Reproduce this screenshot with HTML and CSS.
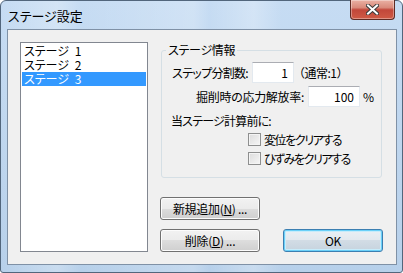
FILE: index.html
```html
<!DOCTYPE html>
<html lang="ja">
<head>
    <title>ステージ設定</title>
    <link rel="stylesheet" href="styles.css">
</head>
<body>
    <div class="window">
        <div class="titlebar">
            <span class="title">ステージ設定</span>
            <div class="close-btn">
                <svg width="13" height="11" viewBox="0 0 13 11">
                    <path d="M2 1.5 L11 9.5 M11 1.5 L2 9.5" stroke="#3b3b3b" stroke-width="4" stroke-linecap="square"/>
                    <path d="M2 1.5 L11 9.5 M11 1.5 L2 9.5" stroke="#fff" stroke-width="2" stroke-linecap="square"/>
                </svg>
            </div>
        </div>
        <div class="client">
            <ul class="stage-list">
                <li>ステージ 1</li>
                <li>ステージ 2</li>
                <li class="selected">ステージ 3</li>
            </ul>
            <div class="side">
                <fieldset class="group">
                    <legend>ステージ情報</legend>
                    <div class="row row-step">
                        <span class="label label-step">ステップ分割数:</span>
                        <span class="edit edit-step">1</span>
                        <span class="note note-step">（通常:1）</span>
                    </div>
                    <div class="row row-rate">
                        <span class="label label-rate">掘削時の応力解放率:</span>
                        <span class="edit edit-rate">100</span>
                        <span class="note">%</span>
                    </div>
                    <div class="caption">当ステージ計算前に:</div>
                    <div class="check">
                        <span class="box"></span>
                        <span class="check-text">変位をクリアする</span>
                    </div>
                    <div class="check">
                        <span class="box"></span>
                        <span class="check-text">ひずみをクリアする</span>
                    </div>
                </fieldset>
                <div class="buttons">
                    <button class="btn">新規追加(<u>N</u>) ...</button>
                    <div class="button-row">
                        <button class="btn">削除(<u>D</u>) ...</button>
                        <button class="btn btn-default">OK</button>
                    </div>
                </div>
            </div>
        </div>
    </div>
</body>
</html>
```

FILE: styles.css
```css
body {
    margin: 0;
    padding: 0;
    width: 403px;
    height: 273px;
    overflow: hidden;
    background-color: #ffffff;
    font-family: "Noto Sans CJK JP", "Noto Sans", sans-serif;
    font-feature-settings: "palt";
}

.window {
    width: 403px;
    height: 273px;
    box-sizing: border-box;
    border: 1px solid #52667c;
    border-radius: 6px 6px 3px 3px;
    background:
        linear-gradient(90deg, rgba(255,255,255,0) 0%, rgba(255,255,255,0.25) 14%, rgba(255,255,255,0) 20%, rgba(255,255,255,0.2) 48%, rgba(255,255,255,0) 52%, rgba(255,255,255,0.25) 63%, rgba(255,255,255,0) 70%),
        linear-gradient(#c6dcf3, #b7d0ea);
    display: flex;
    flex-direction: column;
}

.titlebar {
    height: 28px;
    display: flex;
    justify-content: space-between;
    align-items: center;
    padding-left: 7px;
    padding-right: 7px;
}

.title {
    font-size: 13px;
    color: #000;
    line-height: 16px;
    margin-top: 1px;
}

.close-btn {
    align-self: flex-start;
    margin-top: -1px;
    width: 43px;
    height: 19px;
    border: 1px solid #5e2b24;
    border-top: none;
    border-radius: 0 0 4px 4px;
    background: linear-gradient(#eab1a4 0%, #d98a7b 40%, #c2473a 52%, #cf5a45 100%);
    box-shadow: inset 0 0 0 1px rgba(255,255,255,0.35);
    display: flex;
    align-items: center;
    justify-content: center;
}

.client {
    flex: 1;
    margin: 0 5px 7px 6px;
    border: 1px solid #7f91a6;
    background-color: #f0f0f0;
    padding: 12px 0 0 12px;
    display: flex;
    gap: 12px;
    font-size: 12px;
    color: #000;
}

.stage-list {
    width: 128px;
    height: 210px;
    box-sizing: border-box;
    margin: 0;
    padding: 1px;
    list-style: none;
    border: 1px solid #828790;
    background-color: #fff;
}

.stage-list li {
    height: 14px;
    line-height: 14px;
    padding-left: 2px;
    word-spacing: 3px;
}

.stage-list .selected {
    background-color: #3399ff;
    color: #fff;
}

.side {
    width: 223px;
    height: 210px;
    display: flex;
    flex-direction: column;
    justify-content: space-between;
}

.group {
    margin: 0 0 0 1px;
    padding: 0;
    width: 221px;
    height: 136px;
    box-sizing: border-box;
    border: 1px solid #d5dfe5;
    border-radius: 3px;
}

.group legend {
    margin-left: 4px;
    padding: 0 2px;
    line-height: 16px;
    letter-spacing: -0.3px;
}

.row {
    display: flex;
    align-items: center;
    height: 21px;
    margin-top: 3px;
}

.row-step {
    margin-top: 4px;
}

.label {
    text-align: right;
    box-sizing: border-box;
    padding-right: 4px;
    white-space: nowrap;
}

.label-step {
    width: 81px;
    margin-left: 9px;
    letter-spacing: -0.7px;
}

.label-rate {
    width: 137px;
    margin-left: 9px;
    letter-spacing: -0.3px;
}

.edit {
    height: 21px;
    box-sizing: border-box;
    border: 1px solid #e3e9ef;
    border-top-color: #abadb3;
    background-color: #fff;
    text-align: right;
    padding-right: 5px;
    line-height: 19px;
}

.edit-step {
    width: 42px;
}

.edit-rate {
    width: 52px;
}

.note {
    margin-left: 3px;
    font-feature-settings: normal;
    letter-spacing: -0.5px;
}

.note-step {
    margin-left: -1px;
}

.caption {
    margin: 7px 0 0 9px;
    line-height: 14px;
    letter-spacing: -0.8px;
}

.check {
    display: flex;
    align-items: center;
    gap: 3px;
    height: 16px;
    margin-left: 86px;
    margin-top: 3px;
}

.check-text {
    letter-spacing: -1.4px;
}

.box {
    width: 13px;
    height: 13px;
    box-sizing: border-box;
    border: 1px solid #8e8f8f;
    background: linear-gradient(135deg, #dcdcdc, #f6f6f6);
    box-shadow: inset 0 0 0 1px #f4f4f4;
}

.buttons {
    display: flex;
    flex-direction: column;
    gap: 9px;
}

.button-row {
    display: flex;
    gap: 23px;
}

.btn {
    width: 100px;
    height: 23px;
    padding: 0;
    font-family: inherit;
    font-feature-settings: "palt";
    font-size: 12px;
    letter-spacing: -0.3px;
    color: #000;
    border: 1px solid #707070;
    border-radius: 3px;
    background: linear-gradient(#f2f2f2 0%, #ebebeb 50%, #dddddd 50%, #cfcfcf 100%);
    box-shadow: inset 0 0 0 1px #fcfcfc;
}

.btn-default {
    border-color: #3c7fb1;
    background: linear-gradient(#eaf0f5 0%, #e2e8ee 50%, #d2dce5 50%, #c6d3de 100%);
    box-shadow: inset 0 0 0 1px #6ad0f8, inset 0 0 0 2px #c7ecfb;
}
```
